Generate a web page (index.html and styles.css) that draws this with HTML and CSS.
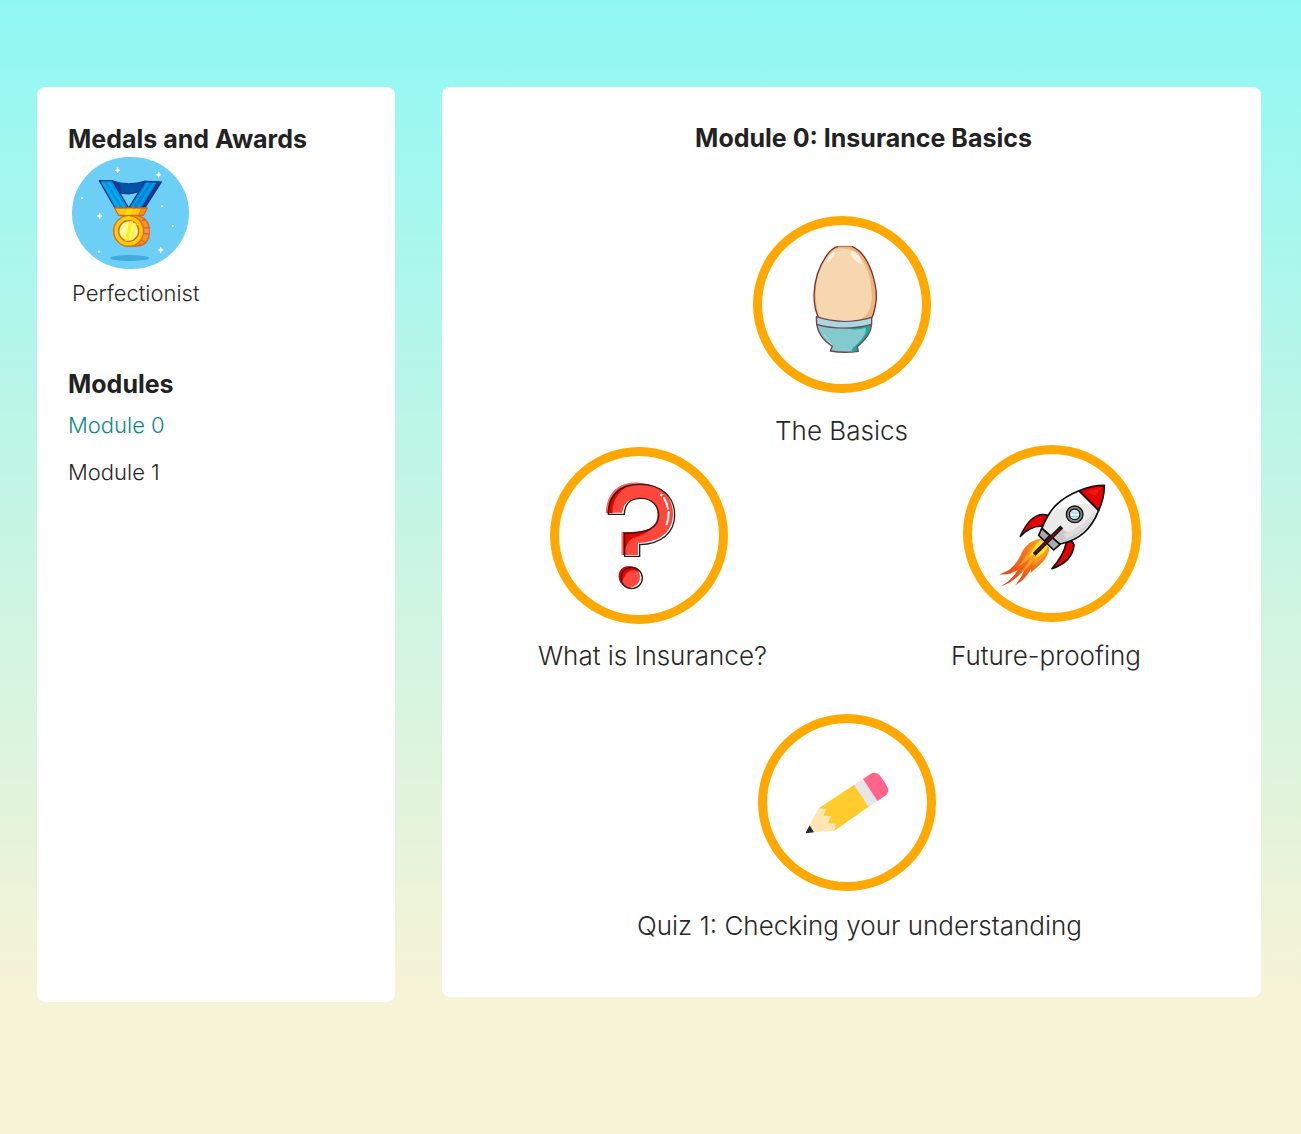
FILE: index.html
```html
<!DOCTYPE html>
<html lang="en">
<head>
<meta charset="utf-8">
<meta name="viewport" content="width=device-width, initial-scale=1">
<title>Module 0: Insurance Basics</title>
<link rel="stylesheet" href="styles.css">
</head>
<body>
<div class="page">
  <aside class="card sidebar">
    <h2 class="heading">Medals and Awards</h2>
    <figure class="award">
      <svg class="award-art" viewBox="36 21 351 336" aria-hidden="true">
        <rect x="36" y="21" width="351" height="336" rx="171" ry="168" fill="#6dcff6"/>
        <ellipse cx="209" cy="324" rx="59" ry="9" fill="#41abe0"/>
        <g fill="#fff">
          <path d="M173 53l2 6 5 2-5 2-2 6-2-6-5-2 5-2zM296 66l2 6 5 2-5 2-2 6-2-6-5-2 5-2zM119 190l2 6 5 2-5 2-2 6-2-6-5-2 5-2zM302 292l2 6 5 2-5 2-2 6-2-6-5-2 5-2z" stroke="#fff" stroke-width="3"/>
          <circle cx="66" cy="144" r="3"/><circle cx="306" cy="169" r="3"/><circle cx="338" cy="228" r="3"/><circle cx="117" cy="305" r="3"/>
        </g>
        <path d="M156 92Q205 110 256 93L234 126Q207 136 181 130Z" fill="#0054a6" stroke="#17388f" stroke-width="3"/>
        <path d="M156 92L182 104V132Z" fill="#17388f"/>
        <path d="M256 94L304 96L254 174H206Z" fill="#0084d6" stroke="#17388f" stroke-width="4" stroke-linejoin="round"/>
        <path d="M265 98L216 172M282 98L235 172" stroke="#00a2e8" stroke-width="5"/>
        <path d="M290 98H304L255 174H243Z" fill="#17388f"/>
        <path d="M118 92H157L206 174H165Z" fill="#0095e0" stroke="#17388f" stroke-width="4" stroke-linejoin="round"/>
        <path d="M128 96L174 172M145 96L193 172" stroke="#00aeef" stroke-width="6"/>
        <path d="M164 174H262L250 196H176Z" fill="#ffcb08" stroke="#dc6420" stroke-width="4" stroke-linejoin="round"/>
        <path d="M244 176H260L249 194H236Z" fill="#f7941d" stroke="#dc6420" stroke-width="2"/>
        <path d="M202 176H218L212 194H196Z" fill="#ffe100"/>
        <path d="M211 197H232Q268 205 268 243Q268 286 232 288H205Z" fill="#f7941d" stroke="#dc6420" stroke-width="4"/>
        <path d="M245 212L259 209M252 234H268M250 251H268M241 270L257 279M232 276L243 286" stroke="#dc6420" stroke-width="4"/>
        <path d="M250 236H266V248H250Z" fill="#f58c68"/>
        <ellipse cx="206" cy="243" rx="45" ry="46" fill="#ffcb08" stroke="#dc6420" stroke-width="4"/>
        <path d="M188 210L197 200H213L204 211M217 276L224 269L236 264L223 283Z" fill="#ffe100"/>
        <ellipse cx="206" cy="243" rx="30" ry="31" fill="#fff799" stroke="#dc6420" stroke-width="4"/>
        <path d="M209 214H219L205 272H194Z" fill="#fff200"/>
        <path d="M224 217L230 224L219 269L211 272Z" fill="#fff44f"/>
      </svg>
      <figcaption class="item">Perfectionist</figcaption>
    </figure>
    <h2 class="heading">Modules</h2>
    <nav class="modules" aria-label="Modules">
      <a class="item module-link module-link--current" href="#module-0" aria-current="page">Module 0</a>
      <a class="item module-link" href="#module-1">Module 1</a>
    </nav>
  </aside>

  <main class="card board">
    <h1 class="heading board-title">Module 0: Insurance Basics</h1>

    <a class="lesson lesson--basics" href="#basics">
      <span class="ring">
        <svg class="art" viewBox="-99 -30 480 477" aria-hidden="true">
          <path d="M130 33H170Q207 48 230 110Q248 165 243 200Q239 231 229 255H72Q57 224 57 179Q59 113 95 61Q111 38 130 33Z" fill="#f6d7b0"/>
          <path d="M130 33H170Q207 48 230 110Q248 165 243 200Q239 231 229 255H193Q229 238 230 190Q232 105 185 54Q164 38 125 41Q84 63 66 135Q58 187 67 225L72 248Q57 224 57 179Q59 113 95 61Q111 38 130 33Z" fill="#eab67d"/>
          <path d="M130 34Q111 38 95 61Q59 113 57 179Q57 224 73 252M170 34Q207 48 230 110Q248 165 243 200Q239 231 229 252" fill="none" stroke="#842d2b" stroke-width="4"/>
          <path d="M132 34H170" stroke="#a8684c" stroke-width="3"/>
          <path d="M98 77L116 55" stroke="#fff" stroke-width="7" stroke-linecap="round"/>
          <ellipse cx="184" cy="67" rx="9" ry="24" fill="#fcefe0" transform="rotate(-40 184 67)"/>
          <path d="M65 268Q146 292 230 267Q228 302 187 335L190 349Q147 355 106 348L112 334Q70 306 65 268Z" fill="#82cacd"/>
          <path d="M151 280Q202 279 229 268Q227 303 187 335L189 349H171Q169 341 178 335Q216 301 212 279Q182 287 151 280Z" fill="#19aaa2"/>
          <path d="M64 245Q145 272 230 247V268Q145 291 65 268Z" fill="#a9d8e2"/>
          <path d="M64 245Q145 272 230 247V268Q228 302 187 335L190 349Q147 355 106 348L112 334Q70 306 65 268ZM65 268Q145 291 230 268" fill="none" stroke="#764348" stroke-width="4" stroke-linejoin="round"/>
          <path d="M88 299Q99 321 111 330" fill="none" stroke="#d5f0f0" stroke-width="2"/>
        </svg>
      </span>
      <span class="label">The Basics</span>
    </a>

    <div class="lesson-row">
      <a class="lesson lesson--what" href="#what-is-insurance">
        <span class="ring">
          <svg class="art" viewBox="-93 -42 480 477" aria-hidden="true">
            <path d="M50 128C51 72 85 39 143 39C208 39 249 76 249 132C249 183 211 217 144 219V255H98V186H123C174 185 201 170 202 135C203 104 184 84 151 84C117 84 99 102 97 128Z" fill="#ff483b"/>
            <path d="M50 128C51 72 85 39 130 40C91 55 66 88 68 130H50ZM98 186H123C161 185 181 178 193 168C174 190 149 199 132 203Q112 211 105 238V255H98Z" fill="#eb0000"/>
            <path d="M50 128C51 72 85 39 143 39M97 255V187" fill="none" stroke="#ff6b5f" stroke-width="5"/>
            <path d="M55 133C56 79 87 43 150 43C213 43 254 80 254 135C254 188 214 222 149 224V259H104V190C166 190 207 176 206 136C206 105 184 85 152 85C118 85 104 106 103 133Z" fill="none" stroke="#242020" stroke-width="4"/>
            <circle cx="118" cy="321" r="32" fill="#ff483b"/>
            <path d="M92 339C78 310 91 287 119 289C135 289 145 298 148 307C130 294 108 302 99 330Z" fill="#eb0000"/>
            <circle cx="125" cy="324" r="32" fill="none" stroke="#242020" stroke-width="4"/>
            <path d="M222 84Q231 99 234 116M236 126Q236 148 230 163" fill="none" stroke="#fff" stroke-width="6" stroke-linecap="round"/>
            <circle cx="214" cy="75" r="4" fill="#fff"/>
          </svg>
        </span>
        <span class="label">What is Insurance?</span>
      </a>
      <a class="lesson lesson--future" href="#future-proofing">
        <span class="ring">
          <svg class="art" viewBox="-54 -66 480 477" aria-hidden="true">
            <defs>
              <linearGradient id="flame" x1="1" y1="0" x2="0" y2="1">
                <stop offset="0" stop-color="#f7a51e"/>
                <stop offset="0.5" stop-color="#f1691f"/>
                <stop offset="1" stop-color="#e8340c"/>
              </linearGradient>
            </defs>
            <path d="M151 188C120 193 101 213 91 239C76 271 53 288 28 295C47 298 64 293 82 283C70 305 50 322 30 332C60 323 84 305 104 279C96 300 86 316 75 328C98 316 113 298 123 279L122 292C146 268 175 250 178 217Z" fill="url(#flame)"/>
            <path d="M150 191C122 208 112 243 84 271C103 263 111 254 121 246C111 267 100 282 86 297C112 278 126 262 136 250L128 271C155 250 174 235 176 214Z" fill="#fb9d22"/>
            <path d="M151 193C133 205 128 229 113 244C131 236 135 231 142 227L136 247C158 234 171 226 172 208Z" fill="#f6e71d"/>
            <path d="M174 118Q126 103 91 181Q124 148 157 151ZM229 200Q221 238 186 278Q248 257 252 206L245 195Z" fill="#e60000" stroke="#111" stroke-width="5" stroke-linejoin="round"/>
            <path d="M267 44C211 66 178 98 156 157L210 204C270 191 304 159 326 103Z" fill="#eaeaea" stroke="#111" stroke-width="5" stroke-linejoin="round"/>
            <path d="M183 110Q207 78 256 54L269 52L302 85Q245 80 183 110Z" fill="#fff"/>
            <path d="M183 173L216 151Q224 182 271 159Q297 145 315 116Q284 179 211 201L195 190Z" fill="#c9c9c9"/>
            <path d="M219 175Q272 157 318 105L309 127Q276 171 229 188Z" fill="#ddd"/>
            <path d="M267 44Q307 28 343 28Q343 67 326 103Z" fill="#e90000" stroke="#111" stroke-width="5" stroke-linejoin="round"/>
            <path d="M290 47L335 34L315 59Z" fill="#ff4940" opacity=".3"/>
            <path d="M155 157L210 205L191 222L146 178Z" fill="#aaa" stroke="#111" stroke-width="5" stroke-linejoin="round"/>
            <path d="M178 179L163 194" stroke="#111" stroke-width="4"/>
            <path d="M137 231L211 157" stroke="#111" stroke-width="12" stroke-linecap="square"/>
            <path d="M139 229L210 158" stroke="#8e0909" stroke-width="4"/>
            <circle cx="254" cy="115" r="25" fill="#8e8e8e" stroke="#111" stroke-width="4"/>
            <circle cx="254" cy="115" r="16" fill="#f3fdff" stroke="#111" stroke-width="4"/>
            <path d="M241 109Q254 98 267 109V114H241Z" fill="#b5e4f7"/>
            <path d="M242 122H266" stroke="#80d4f2" stroke-width="5"/>
          </svg>
        </span>
        <span class="label">Future-proofing</span>
      </a>
    </div>

    <a class="lesson lesson--quiz" href="#quiz-1">
      <span class="ring">
        <svg class="art" viewBox="-84 -111 480 477" aria-hidden="true">
          <path d="M71 145L178 74L221 140L118 212L96 190Z" fill="#ffcc2c"/>
          <path d="M178 74L204 57L247 123L221 140Z" fill="#e6e6e8"/>
          <path d="M204 57L226 42Q241 33 253 44Q270 65 279 85Q283 98 271 107L247 123Z" fill="#ff668a"/>
          <path d="M43 196L71 145L94 146L85 167L108 168L99 190L124 192L117 212L57 217Z" fill="#ffe6b4"/>
          <path d="M44 196L57 217L34 220Q31 220 33 216Z" fill="#292b2d"/>
        </svg>
      </span>
      <span class="label">Quiz 1: Checking your understanding</span>
    </a>
  </main>
</div>
</body>
</html>
```
FILE: styles.css
```css
* {
  box-sizing: border-box;
}

body {
  margin: 0;
  min-height: 100vh;
  background: linear-gradient(to bottom, #90f8f4 0%, #f7f3d6 88%) no-repeat #f7f3d6;
  color: #282828;
  font-family: Inter, "Open Sans", sans-serif;
}

.page {
  display: flex;
  align-items: flex-start;
  gap: 47px;
  padding: 87px 40px 87px 37px;
}

.card {
  background: #fff;
  border-radius: 8px;
}

.sidebar {
  flex: 0 1 358px;
  min-height: calc(100vh - 219px);
  padding: 38px 31px;
}

.board {
  flex: 1;
  display: flex;
  flex-direction: column;
  padding: 37px 0 57px;
}

.heading {
  margin: 0;
  font-size: 25px;
  line-height: 28px;
  font-weight: 700;
  color: #222;
}

.item {
  font-size: 22px;
  line-height: 24px;
  font-weight: 300;
}

.award {
  display: flex;
  flex-direction: column;
  align-items: flex-start;
  gap: 12px;
  margin: 4px 4px 65px;
}

.award-art {
  display: block;
  width: 117px;
  height: 112px;
}

.modules {
  display: flex;
  flex-direction: column;
  align-items: flex-start;
  gap: 23px;
  margin-top: 15px;
}

.module-link {
  color: inherit;
  text-decoration: none;
}

.module-link--current {
  color: #098b8c;
}

.board-title {
  padding-left: 24px;
  margin-bottom: 64px;
  text-align: center;
}

.lesson {
  display: flex;
  flex-direction: column;
  align-items: center;
  gap: 20px;
  color: inherit;
  text-decoration: none;
}

.ring {
  width: 178px;
  height: 177px;
  border: 9px solid #ffa800;
  border-radius: 50%;
}

.art {
  display: block;
  width: 100%;
  height: 100%;
}

.label {
  font-size: 26px;
  line-height: 28px;
  font-weight: 300;
}

.lesson-row {
  display: flex;
  justify-content: space-between;
  align-items: flex-end;
  padding: 0 120px 0 96px;
  margin-bottom: 44px;
}

.lesson--basics {
  gap: 24px;
  padding-right: 20px;
}

.lesson--what {
  align-items: flex-start;
  gap: 18px;
}

.lesson--what .ring {
  margin-left: 12px;
}

.lesson--future {
  align-items: flex-end;
}

.lesson--quiz {
  gap: 21px;
  padding-left: 16px;
}

.lesson--quiz .ring {
  margin-right: 26px;
}
```
